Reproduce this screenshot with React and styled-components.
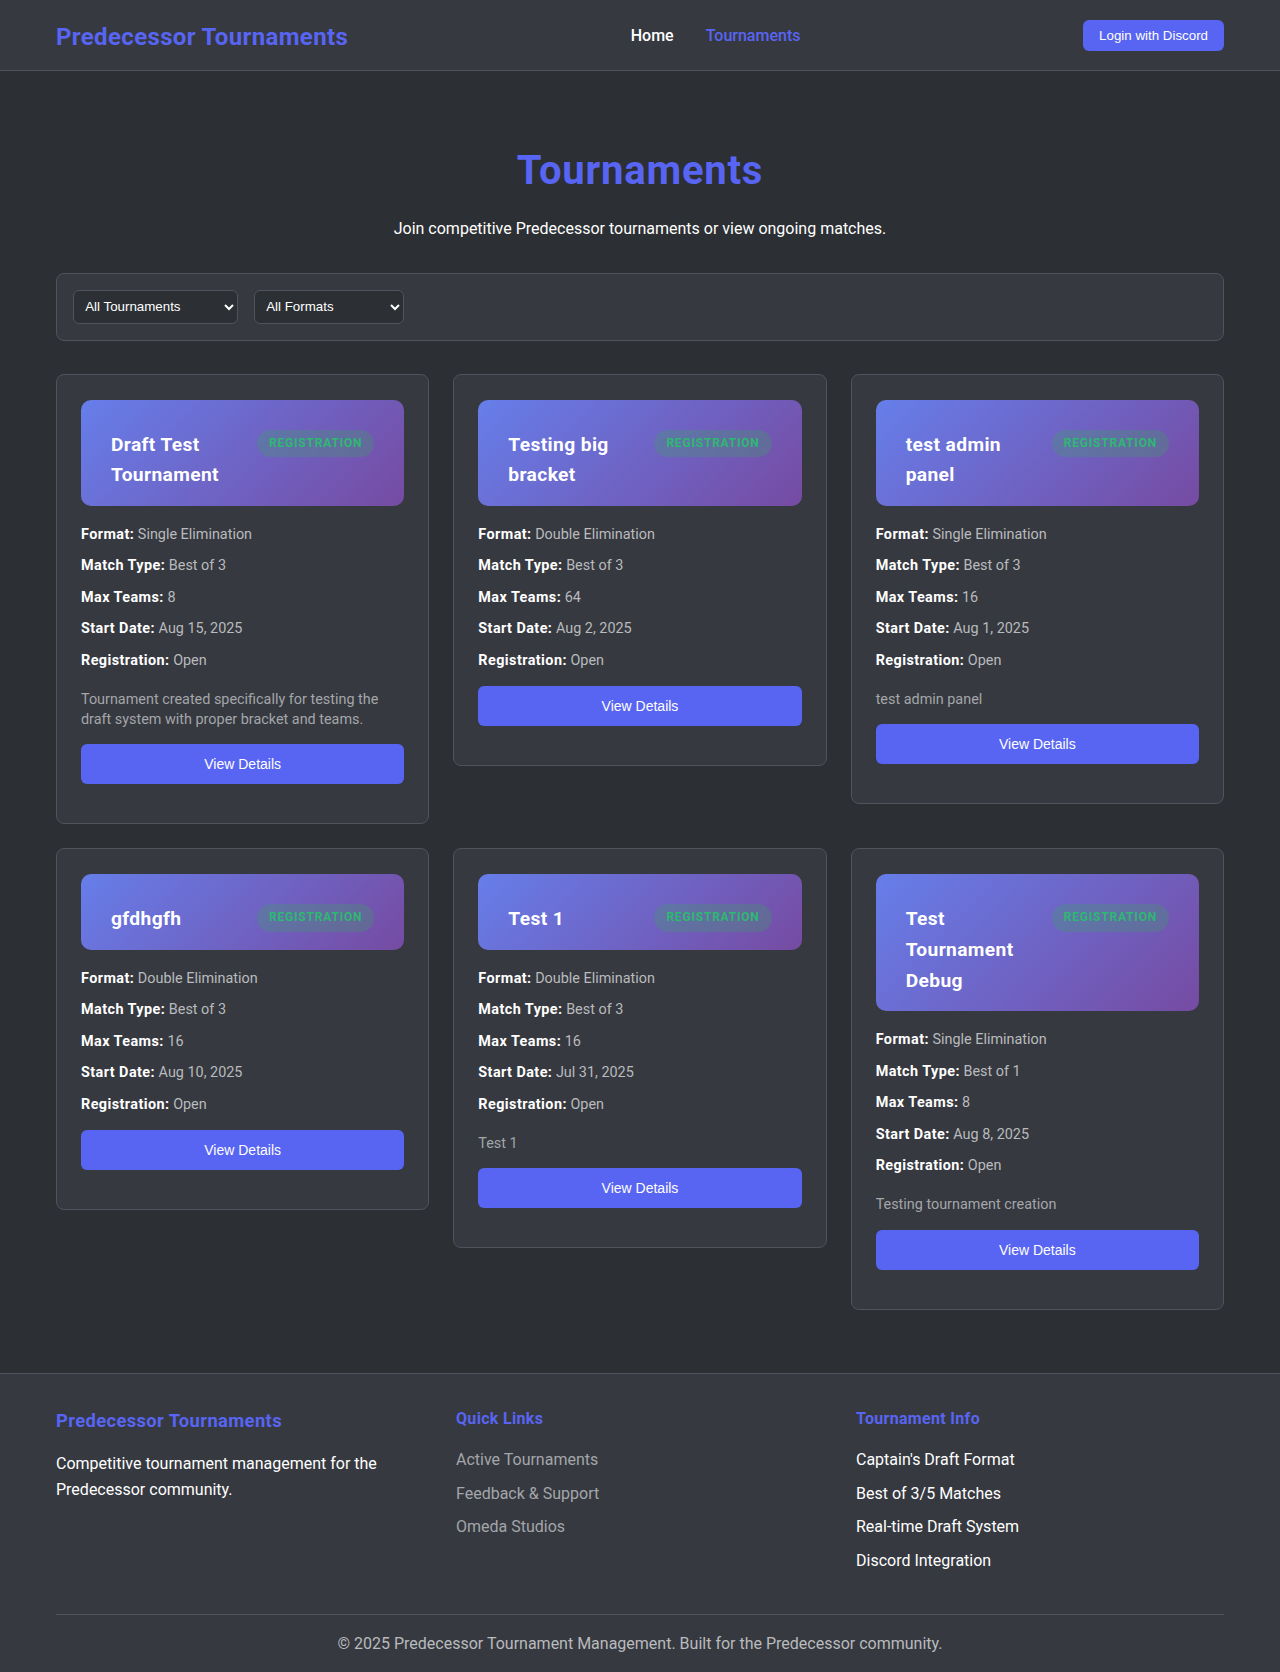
import React from 'react';
import styled, { createGlobalStyle } from 'styled-components';

const GlobalStyle = createGlobalStyle`
    * {
        box-sizing: border-box;
    }

    body {
        margin: 0;
        background: #2c2f33;
        color: #dcddde;
        font-family: Roboto, "Liberation Sans", sans-serif;
        line-height: 1.6;
    }
`;

const tournaments = [
    {
        name: 'Draft Test Tournament',
        format: 'Single Elimination',
        matchType: 'Best of 3',
        maxTeams: 8,
        startDate: 'Aug 15, 2025',
        description: 'Tournament created specifically for testing the draft system with proper bracket and teams.',
    },
    {
        name: 'Testing big bracket',
        format: 'Double Elimination',
        matchType: 'Best of 3',
        maxTeams: 64,
        startDate: 'Aug 2, 2025',
    },
    {
        name: 'test admin panel',
        format: 'Single Elimination',
        matchType: 'Best of 3',
        maxTeams: 16,
        startDate: 'Aug 1, 2025',
        description: 'test admin panel',
    },
    {
        name: 'gfdhgfh',
        format: 'Double Elimination',
        matchType: 'Best of 3',
        maxTeams: 16,
        startDate: 'Aug 10, 2025',
    },
    {
        name: 'Test 1',
        format: 'Double Elimination',
        matchType: 'Best of 3',
        maxTeams: 16,
        startDate: 'Jul 31, 2025',
        description: 'Test 1',
    },
    {
        name: 'Test Tournament Debug',
        format: 'Single Elimination',
        matchType: 'Best of 1',
        maxTeams: 8,
        startDate: 'Aug 8, 2025',
        description: 'Testing tournament creation',
    },
];

export default function App() {
    return (
        <>
            <GlobalStyle />
            <Header>
                <Container>
                    <HeaderBar>
                        <Logo>Predecessor Tournaments</Logo>
                        <Nav>
                            <NavLink>Home</NavLink>
                            <NavLink $active>Tournaments</NavLink>
                        </Nav>
                        <LoginButton>Login with Discord</LoginButton>
                    </HeaderBar>
                </Container>
            </Header>

            <Main>
                <Container>
                    <PageHeader>
                        <PageTitle>Tournaments</PageTitle>
                        <Subtitle>Join competitive Predecessor tournaments or view ongoing matches.</Subtitle>
                    </PageHeader>

                    <Filters>
                        <Select $width={165} defaultValue="all">
                            <option value="all">All Tournaments</option>
                            <option value="open">Registration Open</option>
                            <option value="live">In Progress</option>
                            <option value="done">Completed</option>
                        </Select>
                        <Select $width={150} defaultValue="all">
                            <option value="all">All Formats</option>
                            <option value="single">Single Elimination</option>
                            <option value="double">Double Elimination</option>
                        </Select>
                    </Filters>

                    <Grid>
                        {tournaments.map((t) => (
                            <Card key={t.name}>
                                <CardHeader>
                                    <CardTitle>{t.name}</CardTitle>
                                    <Status>Registration</Status>
                                </CardHeader>
                                <Info><strong>Format:</strong> {t.format}</Info>
                                <Info><strong>Match Type:</strong> {t.matchType}</Info>
                                <Info><strong>Max Teams:</strong> {t.maxTeams}</Info>
                                <Info><strong>Start Date:</strong> {t.startDate}</Info>
                                <Info><strong>Registration:</strong> Open</Info>
                                {t.description && <Description>{t.description}</Description>}
                                <DetailsButton>View Details</DetailsButton>
                            </Card>
                        ))}
                    </Grid>
                </Container>
            </Main>

            <Footer>
                <Container>
                    <FooterGrid>
                        <div>
                            <FooterBrand>Predecessor Tournaments</FooterBrand>
                            <FooterText>Competitive tournament management for the Predecessor community.</FooterText>
                        </div>
                        <div>
                            <FooterHeading>Quick Links</FooterHeading>
                            <FooterList>
                                <FooterItem $muted>Active Tournaments</FooterItem>
                                <FooterItem $muted>Feedback &amp; Support</FooterItem>
                                <FooterItem $muted>Omeda Studios</FooterItem>
                            </FooterList>
                        </div>
                        <div>
                            <FooterHeading>Tournament Info</FooterHeading>
                            <FooterList>
                                <FooterItem>Captain's Draft Format</FooterItem>
                                <FooterItem>Best of 3/5 Matches</FooterItem>
                                <FooterItem>Real-time Draft System</FooterItem>
                                <FooterItem>Discord Integration</FooterItem>
                            </FooterList>
                        </div>
                    </FooterGrid>
                    <FooterBottom>© 2025 Predecessor Tournament Management. Built for the Predecessor community.</FooterBottom>
                </Container>
            </Footer>
        </>
    );
}

const Container = styled.div`
    max-width: 1200px;
    margin: 0 auto;
    padding: 0 1rem;
`;

const Header = styled.header`
    background: #36393f;
    border-bottom: 1px solid #4f545c;
`;

const HeaderBar = styled.div`
    height: 70px;
    display: flex;
    justify-content: space-between;
    align-items: center;
`;

const Logo = styled.div`
    padding-top: 4px;
    color: #5865f2;
    font-size: 24px;
    font-weight: 700;
    letter-spacing: 0.015em;
`;

const Nav = styled.nav`
    display: flex;
    gap: 2rem;
    padding-top: 2px;
`;

const NavLink = styled.a`
    color: ${(p) => (p.$active ? '#5865f2' : '#ffffff')};
    font-size: 16px;
    font-weight: 500;
    cursor: pointer;
`;

const LoginButton = styled.button`
    background: #5865f2;
    color: #ffffff;
    border: none;
    border-radius: 6px;
    padding: 0.5rem 1rem;
    font-family: "Liberation Sans", Arial, sans-serif;
    font-size: 13.333px;
    font-weight: 500;
    cursor: pointer;
`;

const Main = styled.main`
    padding-bottom: 63px;
`;

const PageHeader = styled.section`
    text-align: center;
    padding-top: 76px;
    margin-bottom: 31px;
`;

const PageTitle = styled.h1`
    margin: 0 0 21px;
    color: #5865f2;
    font-size: 40px;
    font-weight: 700;
    line-height: 48px;
    letter-spacing: 0.02em;
`;

const Subtitle = styled.p`
    margin: 0;
    color: #ffffff;
    font-size: 16px;
`;

const Filters = styled.div`
    display: flex;
    gap: 1rem;
    padding: 1rem;
    margin-bottom: 33px;
    background: #36393f;
    border: 1px solid #4f545c;
    border-radius: 8px;
`;

const Select = styled.select`
    width: ${(p) => p.$width}px;
    height: 34px;
    padding: 0 0.5rem 0 0.45rem;
    background: #2c2f33;
    color: #ffffff;
    border: 1px solid #4f545c;
    border-radius: 6px;
    font-family: "Liberation Sans", Arial, sans-serif;
    font-size: 13.333px;
    color-scheme: dark;
`;

const Grid = styled.div`
    display: grid;
    grid-template-columns: repeat(3, 1fr);
    gap: 1.5rem;
    align-items: start;
`;

const Card = styled.article`
    background: #36393f;
    border: 1px solid #4f545c;
    border-radius: 8px;
    padding: 25px 1.5rem 1.5rem;
`;

const CardHeader = styled.div`
    display: flex;
    justify-content: space-between;
    align-items: flex-start;
    gap: 1rem;
    padding: 30px 30px 15px;
    margin-bottom: 17px;
    border-radius: 10px;
    background: linear-gradient(135deg, #667eea 0%, #764ba2 100%);
`;

const CardTitle = styled.h3`
    flex: 1;
    margin: 0;
    color: #ffffff;
    font-size: 19.2px;
    font-weight: 700;
    line-height: 30.7px;
    letter-spacing: 0.02em;
`;

const Status = styled.span`
    flex-shrink: 0;
    padding: 0.25rem 0.75rem;
    border-radius: 20px;
    background: rgba(59, 165, 93, 0.28);
    color: #2eb872;
    font-size: 12px;
    font-weight: 700;
    line-height: 1.6;
    letter-spacing: 0.8px;
    text-transform: uppercase;
    white-space: nowrap;
`;

const Info = styled.p`
    margin: 0 0 0.5rem;
    color: #b9bbbe;
    font-size: 14.4px;
    line-height: 23.4px;

    strong {
        color: #ffffff;
        font-weight: 700;
        letter-spacing: 0.03em;
    }
`;

const Description = styled.p`
    margin: 18px 0 14px;
    color: #a3a6aa;
    font-size: 14.4px;
    line-height: 1.4;
`;

const DetailsButton = styled.button`
    display: block;
    width: 100%;
    margin: 14px 0 15px;
    padding: 0.75rem;
    background: #5865f2;
    color: #ffffff;
    border: none;
    border-radius: 6px;
    font-family: "Liberation Sans", Arial, sans-serif;
    font-size: 14px;
    cursor: pointer;
`;

const Footer = styled.footer`
    background: #36393f;
    border-top: 1px solid #4f545c;
    padding: 2rem 0 1rem;
`;

const FooterGrid = styled.div`
    display: grid;
    grid-template-columns: repeat(3, 1fr);
    gap: 2rem;
    margin-bottom: 2rem;
`;

const FooterBrand = styled.h3`
    margin: 0 0 1rem;
    color: #5865f2;
    font-size: 18.4px;
    font-weight: 700;
    letter-spacing: 0.02em;
`;

const FooterHeading = styled.h4`
    margin: 0 0 1rem;
    color: #5865f2;
    font-size: 16px;
    font-weight: 700;
    letter-spacing: 0.02em;
`;

const FooterText = styled.p`
    margin: 0;
    color: #ffffff;
    font-size: 16px;
`;

const FooterList = styled.ul`
    list-style: none;
    margin: 0;
    padding: 0;
`;

const FooterItem = styled.li`
    margin-bottom: 0.5rem;
    color: ${(p) => (p.$muted ? '#a3a6aa' : '#ffffff')};
    font-size: 16px;
`;

const FooterBottom = styled.p`
    margin: 0;
    padding-top: 1rem;
    border-top: 1px solid #4f545c;
    text-align: center;
    color: #b9bbbe;
    font-size: 16px;
`;
